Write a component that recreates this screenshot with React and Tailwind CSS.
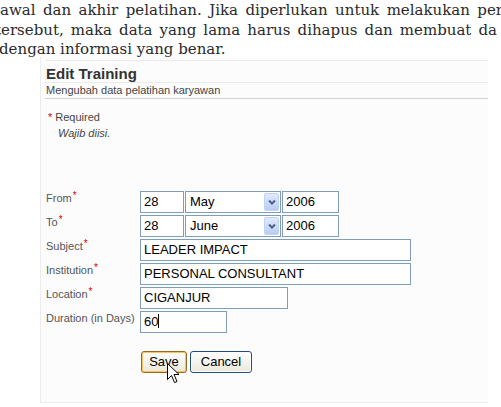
import React from 'react';

const serif = "font-['DejaVu_Serif','Liberation_Serif',serif]";
const sans = "font-['Liberation_Sans',Arial,sans-serif]";

const Req = () => <span className="relative -top-[3px] ml-[1px] text-[10px] text-[#d40000]">*</span>;

const Label = ({ children, required }) => (
  <div className="h-[22px] text-[11px] leading-[13px] pt-[1px] text-[#555]">
    {children}
    {required && <Req />}
  </div>
);

const Field = ({ value, width, caret }) => (
  <div
    className={`h-[22px] border border-[#7f9db9] bg-white pl-[3px] text-[13px] leading-[20px] text-black ${width}`}
  >
    {value}
    {caret && <span className="inline-block w-[1px] h-[14px] bg-black align-[-2px]" />}
  </div>
);

const Select = ({ value }) => (
  <div className="h-[22px] w-[96px] border border-[#7f9db9] bg-white flex items-center justify-between pl-[4px] pr-[1px] text-[13px] text-black">
    <span>{value}</span>
    <div className="h-[18px] w-[15px] rounded-[2px] border border-[#c3d3f5] bg-gradient-to-b from-[#e1eafd] to-[#b9ccf6] flex items-center justify-center">
      <svg width="8" height="6" viewBox="0 0 8 6">
        <path d="M1 1.5 L4 4.5 L7 1.5" fill="none" stroke="#4d6185" strokeWidth="2" />
      </svg>
    </div>
  </div>
);

const DateRow = ({ day, month, year }) => (
  <div className="flex gap-[1px]">
    <Field value={day} width="w-[44px]" />
    <Select value={month} />
    <Field value={year} width="w-[57px]" />
  </div>
);

export default function App() {
  return (
    <div className="relative w-[501px] h-[407px] overflow-hidden bg-white">
      {/* running text of the page above the figure */}
      <div className={`h-[57px] overflow-hidden text-[15px] leading-[19.5px] text-[#2a2a2a] ${serif}`}>
        <div className="w-[503px] pt-[1px] text-justify [text-align-last:justify]">
          awal dan akhir pelatihan. Jika diperlukan untuk melakukan per
        </div>
        <div className="w-[502px] -ml-[5px] text-justify [text-align-last:justify]">
          tersebut, maka data yang lama harus dihapus dan membuat da
        </div>
        <div className="-ml-[1px]">dengan informasi yang benar.</div>
      </div>

      {/* captured form */}
      <div className={`ml-[40px] w-[448px] h-[346px] border-l border-b border-[#ececec] bg-[#fcfcfc] pl-[4px] ${sans}`}>
        <div className="h-[3px]" />
        <div className="h-[23px] border-y border-[#ebebeb] pl-[1px] text-[15px] font-bold leading-[25px] text-[#333]">
          Edit Training
        </div>
        <div className="h-[16px] border-b border-[#d2d2d2] pl-[1px] text-[11px] leading-[15px] text-[#444]">
          Mengubah data pelatihan karyawan
        </div>

        <div className="mt-[10px] pl-[3px] text-[11px] leading-[16px] text-[#444]">
          <span className="text-[#d40000]">*</span>
          <span className="ml-[3px]">Required</span>
        </div>
        <div className="pl-[13px] text-[11px] leading-[16px] italic text-[#444]">Wajib diisi.</div>

        <div className="mt-[50px] pl-[1px] grid grid-cols-[94px_auto] gap-y-[2px] items-start">
          <Label required>From</Label>
          <DateRow day="28" month="May" year="2006" />
          <Label required>To</Label>
          <DateRow day="28" month="June" year="2006" />
          <Label required>Subject</Label>
          <Field value="LEADER IMPACT" width="w-[271px]" />
          <Label required>Institution</Label>
          <Field value="PERSONAL CONSULTANT" width="w-[271px]" />
          <Label required>Location</Label>
          <Field value="CIGANJUR" width="w-[148px]" />
          <Label>Duration (in Days)</Label>
          <Field value="60" width="w-[87px]" caret />
        </div>

        <div className="mt-[18px] ml-[96px] flex gap-[3px] text-[13px] text-black">
          <button className="h-[22px] w-[46px] rounded-[3px] border border-[#9a6a1c] bg-gradient-to-b from-white to-[#ebe8db] shadow-[inset_0_0_0_1px_#f6c463]">
            Save
          </button>
          <button className="h-[22px] w-[62px] rounded-[3px] border border-[#1f4f82] bg-gradient-to-b from-white to-[#ebe8db] shadow-[inset_0_0_0_1px_#fff]">
            Cancel
          </button>
        </div>
      </div>

      {/* caption under the figure, mostly below the fold */}
      <div className={`ml-[85px] mt-[2px] text-[15px] leading-[19px] text-[#333] ${serif}`}>
        Gambar 4.24 Tampilan halaman untuk mengubah data pelatihan
      </div>

      {/* mouse pointer resting over the Save button */}
      <svg className="absolute left-[167px] top-[363px]" width="13" height="21" viewBox="0 0 13 21">
        <path d="M0.5 0.5 L0.5 16.5 L4.5 12.5 L7.5 19.5 L10 18.5 L7 11.5 L12 11.5 Z" fill="white" stroke="black" strokeWidth="1" />
      </svg>
    </div>
  );
}
